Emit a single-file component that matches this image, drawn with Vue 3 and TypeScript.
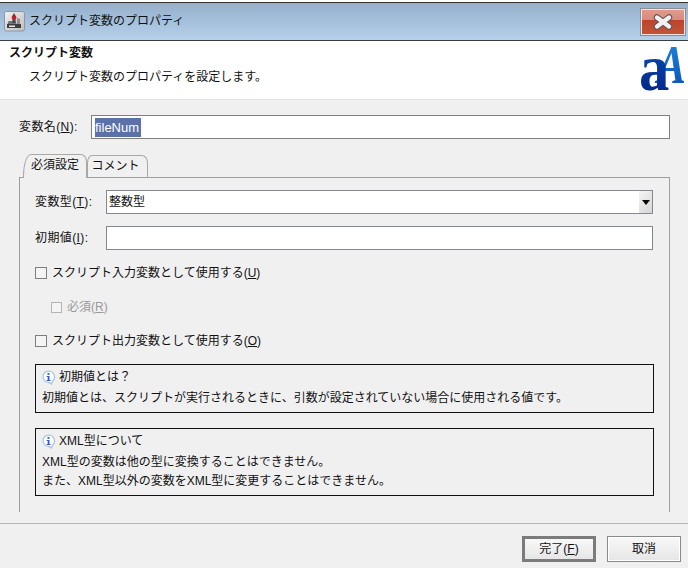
<script setup lang="ts">
interface Check { label: string; key: string; indent?: boolean; disabled?: boolean }
const checks: Check[] = [
  { label: 'スクリプト入力変数として使用する', key: 'U' },
  { label: '必須', key: 'R', indent: true, disabled: true },
  { label: 'スクリプト出力変数として使用する', key: 'O' },
]
</script>

<template>
  <div class="win">
    <div class="titlebar">
      <div class="appicon">
        <svg width="21" height="21" viewBox="0 0 21 21">
          <defs>
            <linearGradient id="gIcon" x1="0" y1="0" x2="1" y2="1">
              <stop offset="0" stop-color="#f2f2f2" />
              <stop offset="1" stop-color="#bdbdbd" />
            </linearGradient>
          </defs>
          <rect x="0.5" y="0.5" width="20" height="19.5" rx="2" fill="url(#gIcon)" stroke="#8d97a3" />
          <path d="M4.5 10h7l1 3h-9z" fill="#6d7680" />
          <path d="M3 13h14v4H3z" fill="#3d3d40" />
          <path d="M5 14.5h6v1.5H5z" fill="#e8e8e8" />
          <path d="M13 7l3 1v5h-3z" fill="#8d8d8d" />
          <path d="M8.5 7.5h3V12h-3z" fill="#444" />
          <circle cx="10" cy="6.5" r="2.4" fill="#c6202c" />
          <path d="M9.3 2.5h1.4v3H9.3z" fill="#702028" />
        </svg>
      </div>
      <span class="title">スクリプト変数のプロパティ</span>
      <div class="close">
        <svg width="20" height="16" viewBox="0 0 20 16">
          <path d="M4 3.5L16 12.5M16 3.5L4 12.5" fill="none" stroke="#565656" stroke-width="6.4" stroke-linecap="round" />
          <path d="M4 3.5L16 12.5M16 3.5L4 12.5" fill="none" stroke="#f2f2f2" stroke-width="4.4" stroke-linecap="round" />
        </svg>
      </div>
    </div>

    <header class="head">
      <div class="head-text">
        <div class="head-title">スクリプト変数</div>
        <div class="head-desc">スクリプト変数のプロパティを設定します。</div>
      </div>
      <svg class="logo" width="52" height="54" viewBox="0 0 52 54">
        <defs>
          <linearGradient id="gA" x1="0" y1="0" x2="0" y2="1">
            <stop offset="0" stop-color="#1f8be0" />
            <stop offset="1" stop-color="#0a4db0" />
          </linearGradient>
          <linearGradient id="gLittle" x1="0" y1="0" x2="0" y2="1">
            <stop offset="0" stop-color="#0b58bc" />
            <stop offset="1" stop-color="#041c80" />
          </linearGradient>
        </defs>
        <text transform="translate(21 39) scale(0.8 1)" font-family="Liberation Serif" font-style="italic" font-weight="700" font-size="54" fill="url(#gA)">A</text>
        <text transform="translate(3 46) scale(0.92 1)" font-family="Liberation Serif" font-weight="700" font-size="66" fill="url(#gLittle)">a</text>
      </svg>
    </header>

    <main class="body">
      <div class="name-row">
        <label class="name-label">変数名(<u>N</u>):</label>
        <div class="field name-field"><span class="sel">fileNum</span></div>
      </div>

      <div class="tabs">
        <div class="tab active">必須設定</div>
        <div class="tab">コメント</div>
      </div>

      <section class="panel">
        <div class="form-row first">
          <label class="form-label">変数型(<u>T</u>):</label>
          <div class="field combo">
            <span class="combo-value">整数型</span>
            <span class="combo-btn"><i class="arrow"></i></span>
          </div>
        </div>
        <div class="form-row second">
          <label class="form-label">初期値(<u>I</u>):</label>
          <div class="field plain"></div>
        </div>

        <div class="checks">
          <div v-for="c in checks" :key="c.key" class="check" :class="{ indent: c.indent, disabled: c.disabled }">
            <span class="box"></span>
            <span>{{ c.label }}(<u>{{ c.key }}</u>)</span>
          </div>
        </div>

        <div class="note note-one">
          <div class="note-title">
            <svg class="info" width="15" height="15" viewBox="0 0 15 15">
              <path d="M7.5 1a6 6 0 0 1 3.6 10.8L10.5 14l-2.6-1.6A5.7 5.7 0 1 1 7.5 1z" fill="#fff" stroke="#a8bfe0" stroke-width="1.2" />
              <rect x="6.5" y="3" width="2" height="1.8" fill="#2a62c8" />
              <path d="M5.7 6h2.8v4h1v1H5.7v-1h1V7h-1z" fill="#2a62c8" />
            </svg>
            <span>初期値とは？</span>
          </div>
          <div>初期値とは、スクリプトが実行されるときに、引数が設定されていない場合に使用される値です。</div>
        </div>

        <div class="note note-two">
          <div class="note-title">
            <svg class="info" width="15" height="15" viewBox="0 0 15 15">
              <path d="M7.5 1a6 6 0 0 1 3.6 10.8L10.5 14l-2.6-1.6A5.7 5.7 0 1 1 7.5 1z" fill="#fff" stroke="#a8bfe0" stroke-width="1.2" />
              <rect x="6.5" y="3" width="2" height="1.8" fill="#2a62c8" />
              <path d="M5.7 6h2.8v4h1v1H5.7v-1h1V7h-1z" fill="#2a62c8" />
            </svg>
            <span>XML型について</span>
          </div>
          <div>XML型の変数は他の型に変換することはできません。</div>
          <div>また、XML型以外の変数をXML型に変更することはできません。</div>
        </div>
      </section>
    </main>

    <footer class="foot">
      <button class="btn primary">完了(<u>F</u>)</button>
      <button class="btn">取消</button>
    </footer>
  </div>
</template>

<style>
html, body { margin: 0; background: #f0f0f0; }
</style>

<style scoped>
.win {
  width: 688px;
  height: 568px;
  display: flex;
  flex-direction: column;
  overflow: hidden;
  background: #f0f0f0;
  color: #111;
  font: 12px/16px "Liberation Sans", "Noto Sans CJK JP", sans-serif;
}
.titlebar {
  box-sizing: border-box;
  height: 41px;
  flex: none;
  display: flex;
  align-items: flex-start;
  padding: 6px 2px 0 4px;
  background: linear-gradient(#93afcb, #b6d0ea);
  border-top: 2px solid #fff;
  box-shadow: inset 0 1px 0 #333;
  border-bottom: 1px solid #3a3f45;
}
.appicon { width: 21px; height: 21px; margin-top: 3px; display: flex; }
.title { margin: 5px 0 0 4px; font-size: 12px; color: #111; }
.close {
  box-sizing: border-box;
  margin-left: auto;
  width: 46px;
  height: 28px;
  display: flex;
  align-items: center;
  justify-content: center;
  border: 1px solid #8a8f95;
  background: linear-gradient(#e39a8c 0, #d98a7c 42%, #bb4428 43%, #c4553a 100%);
  box-shadow: inset 0 0 0 1px #f3e3df;
}
.head {
  box-sizing: border-box;
  height: 59px;
  flex: none;
  display: flex;
  justify-content: space-between;
  background: #fff;
  border-bottom: 1px solid #e2e2e2;
}
.head-text { padding: 4px 0 0 9px; }
.head-title { font-weight: 700; }
.head-desc { margin: 8px 0 0 20px; }
.logo { margin: 3px 0 0 0; overflow: visible; }
.body {
  flex: 1;
  min-height: 0;
  padding: 15px 18px 0 19px;
  border-bottom: 1px solid #b5b5b5;
}
.name-row { display: flex; align-items: center; }
.name-label { width: 72px; flex: none; letter-spacing: 0.4px; }
.field {
  box-sizing: border-box;
  height: 24px;
  background: #fff;
  border: 1px solid #828790;
}
.name-field {
  flex: 1;
  display: flex;
  align-items: center;
  padding-left: 3px;
  border-color: #7f7f7f;
}
.sel { background: #5a72a8; color: #fff; font-size: 13px; line-height: 19px; padding: 0 2px 0 0; }
.tabs { display: flex; margin: 15px 0 0 4px; height: 23px; align-items: flex-end; position: relative; }
.tab {
  box-sizing: border-box;
  width: 61px;
  height: 22px;
  text-align: center;
  line-height: 21px;
  padding-right: 4px;
  border: 1px solid #a8a8a8;
  border-bottom: 0;
  border-radius: 5px 6px 0 0 / 8px 8px 0 0;
  background: #f0f0f0;
}
.tab.active {
  width: 64px;
  height: 24px;
  padding-right: 0;
  position: relative;
  top: 1px;
  z-index: 1;
  border-radius: 8px 6px 0 0 / 22px 8px 0 0;
}
.panel {
  box-sizing: border-box;
  height: 335px;
  padding: 12px 16px 0 15px;
  border: 1px solid #9e9e9e;
  border-bottom: 0;
}
.form-row { display: flex; align-items: center; }
.second { margin-top: 12px; }
.form-label { width: 71px; flex: none; letter-spacing: 0.4px; }
.combo, .plain { flex: 1; }
.combo { display: flex; align-items: center; justify-content: space-between; padding: 0 0 0 2px; }
.combo-value { font-size: 12px; }
.combo-btn {
  width: 13px;
  height: 22px;
  display: flex;
  align-items: center;
  justify-content: center;
  background: linear-gradient(135deg, #f4f4f4, #d6d6d6);
}
.arrow {
  width: 0;
  height: 0;
  border-left: 4px solid transparent;
  border-right: 4px solid transparent;
  border-top: 5px solid #000;
}
.checks { display: flex; flex-direction: column; gap: 18px; margin-top: 15px; }
.check { display: flex; align-items: center; gap: 5px; height: 16px; }
.check.indent { padding-left: 16px; }
.box {
  box-sizing: border-box;
  width: 12px;
  height: 12px;
  background: #f4f4f4;
  border: 1px solid #7f7f7f;
}
.check.disabled { color: #9a9a9a; }
.check.disabled .box { border-color: #b4b4b4; width: 11px; height: 11px; }
.note {
  box-sizing: border-box;
  margin-right: -1px;
  padding: 3px 6px 0 6px;
  border: 1px solid #111;
  line-height: 19px;
}
.note-one { height: 49px; margin-top: 15px; }
.note-two { height: 68px; margin-top: 15px; }
.note-title { display: flex; align-items: center; gap: 3px; margin-left: -1px; margin-bottom: 2px; }
.foot {
  box-sizing: border-box;
  height: 44px;
  flex: none;
  display: flex;
  justify-content: flex-end;
  gap: 11px;
  padding: 12px 7px 0 0;
}
.btn {
  box-sizing: border-box;
  width: 74px;
  height: 26px;
  padding: 0;
  font: inherit;
  color: #111;
  border: 1px solid #8a8a8a;
  background: linear-gradient(#f8f8f8, #e6e6e6);
  box-shadow: inset 0 0 0 1px #fff;
}
.btn.primary { border: 3px solid #7b7b7b; box-shadow: none; }
</style>
